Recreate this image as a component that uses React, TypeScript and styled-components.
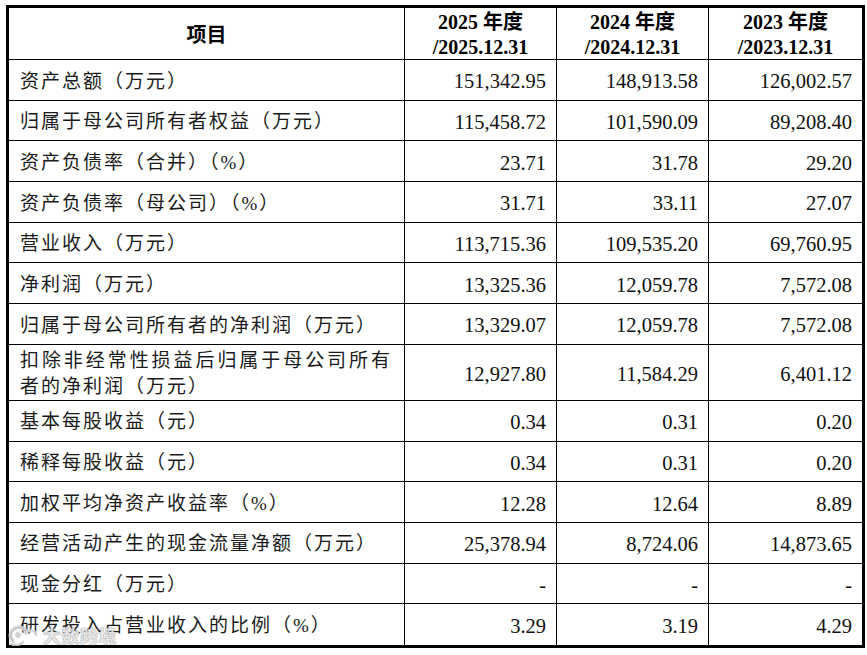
import React from "react";
import styled, { createGlobalStyle } from "styled-components";

const Global = createGlobalStyle`
  html, body { margin: 0; padding: 0; background: #fff; }
  body { width: 867px; height: 655px; overflow: hidden; }
`;

const Page = styled.div`
  position: relative;
  width: 867px;
  height: 655px;
  padding: 5px 0 0 6px;
  box-sizing: border-box;
  background: #fff;
`;

const Table = styled.div`
  display: grid;
  grid-template-columns: 396px 152px 152px 153px;
  grid-template-rows: 52px repeat(7, 40.7px) 56px repeat(6, 40.7px);
  width: max-content;
  border: 3px solid #000;
  color: #111;
`;

const Cell = styled.div<{ $align: "left" | "right" | "center"; $lastCol?: boolean; $lastRow?: boolean }>`
  box-sizing: border-box;
  display: flex;
  flex-direction: column;
  justify-content: center;
  align-items: ${(p) => (p.$align === "left" ? "stretch" : p.$align === "right" ? "flex-end" : "center")};
  text-align: ${(p) => p.$align};
  border-right: ${(p) => (p.$lastCol ? "none" : "1px solid #000")};
  border-bottom: ${(p) => (p.$lastRow ? "none" : "1px solid #000")};
  padding: ${(p) => (p.$align === "left" ? "3px 12px 0 11px" : p.$align === "right" ? "3px 10px 0 0" : "3px 0 0")};
  overflow: hidden;
`;

const HeadText = styled.span`
  font-family: "Liberation Serif", "Noto Sans CJK SC", serif;
  font-weight: 700;
  font-size: 20px;
  line-height: 25px;
  color: #000;
`;

const Label = styled.span<{ $justify?: boolean }>`
  display: block;
  font-family: "Liberation Serif", "Noto Sans CJK SC", serif;
  font-size: 19px;
  line-height: 25.5px;
  letter-spacing: 2px;
  white-space: nowrap;
  color: #1a1a1a;
  text-align: ${(p) => (p.$justify ? "justify" : "left")};
  text-align-last: ${(p) => (p.$justify ? "justify" : "left")};
  text-justify: inter-character;
`;

const Num = styled.span`
  font-family: "Liberation Serif", "Times New Roman", serif;
  font-size: 20.5px;
  line-height: 24px;
  color: #111;
`;

const Watermark = styled.div`
  position: absolute;
  left: 7px;
  top: 623px;
  display: flex;
  align-items: center;
  gap: 4px;
  pointer-events: none;
  opacity: 0.9;
`;

const MarkText = styled.span`
  font-family: "Noto Sans CJK SC", sans-serif;
  font-weight: 700;
  font-size: 18px;
  line-height: 24px;
  letter-spacing: 0.5px;
  color: #e6e6e6;
  text-shadow: 0 0 1px #8a8a8a, 0 0 1px #8a8a8a;
`;

type Row = { label: string[]; values: string[] };

const headers = [
  ["2025 年度", "/2025.12.31"],
  ["2024 年度", "/2024.12.31"],
  ["2023 年度", "/2023.12.31"],
];

const rows: Row[] = [
  { label: ["资产总额（万元）"], values: ["151,342.95", "148,913.58", "126,002.57"] },
  { label: ["归属于母公司所有者权益（万元）"], values: ["115,458.72", "101,590.09", "89,208.40"] },
  { label: ["资产负债率（合并）（%）"], values: ["23.71", "31.78", "29.20"] },
  { label: ["资产负债率（母公司）（%）"], values: ["31.71", "33.11", "27.07"] },
  { label: ["营业收入（万元）"], values: ["113,715.36", "109,535.20", "69,760.95"] },
  { label: ["净利润（万元）"], values: ["13,325.36", "12,059.78", "7,572.08"] },
  { label: ["归属于母公司所有者的净利润（万元）"], values: ["13,329.07", "12,059.78", "7,572.08"] },
  {
    label: ["扣除非经常性损益后归属于母公司所有", "者的净利润（万元）"],
    values: ["12,927.80", "11,584.29", "6,401.12"],
  },
  { label: ["基本每股收益（元）"], values: ["0.34", "0.31", "0.20"] },
  { label: ["稀释每股收益（元）"], values: ["0.34", "0.31", "0.20"] },
  { label: ["加权平均净资产收益率（%）"], values: ["12.28", "12.64", "8.89"] },
  { label: ["经营活动产生的现金流量净额（万元）"], values: ["25,378.94", "8,724.06", "14,873.65"] },
  { label: ["现金分红（万元）"], values: ["-", "-", "-"] },
  { label: ["研发投入占营业收入的比例（%）"], values: ["3.29", "3.19", "4.29"] },
];

const Logo = () => (
  <svg width="32" height="22" viewBox="0 0 32 22" fill="none">
    <path d="M6 17 C2 13, 3 6, 9 4 C14 2, 19 5, 19 9" stroke="#d8d8d8" strokeWidth="4" strokeLinecap="round" />
    <path d="M6 17 C2 13, 3 6, 9 4 C14 2, 19 5, 19 9" stroke="#9a9a9a" strokeWidth="1" strokeLinecap="round" opacity="0.6" />
    <circle cx="11" cy="11" r="3" fill="#d0d0d0" />
    <path d="M20 8 C24 5, 29 7, 29 11" stroke="#d8d8d8" strokeWidth="3" strokeLinecap="round" />
    <path d="M4 20 C8 22, 14 21, 16 18" stroke="#cfcfcf" strokeWidth="2.5" strokeLinecap="round" />
  </svg>
);

export default function App() {
  const lastRowIndex = rows.length - 1;
  return (
    <Page>
      <Global />
      <Table>
        <Cell $align="center">
          <HeadText>项目</HeadText>
        </Cell>
        {headers.map((h, i) => (
          <Cell key={h[1]} $align="center" $lastCol={i === headers.length - 1}>
            <HeadText>{h[0]}</HeadText>
            <HeadText>{h[1]}</HeadText>
          </Cell>
        ))}
        {rows.map((r, ri) => (
          <React.Fragment key={ri}>
            <Cell $align="left" $lastRow={ri === lastRowIndex}>
              {r.label.map((line, li) => (
                <Label key={li} $justify={r.label.length > 1 && li === 0}>
                  {line}
                </Label>
              ))}
            </Cell>
            {r.values.map((v, vi) => (
              <Cell
                key={vi}
                $align="right"
                $lastCol={vi === r.values.length - 1}
                $lastRow={ri === lastRowIndex}
              >
                <Num>{v}</Num>
              </Cell>
            ))}
          </React.Fragment>
        ))}
      </Table>
      <Watermark>
        <Logo />
        <MarkText>大数跨境</MarkText>
      </Watermark>
    </Page>
  );
}
